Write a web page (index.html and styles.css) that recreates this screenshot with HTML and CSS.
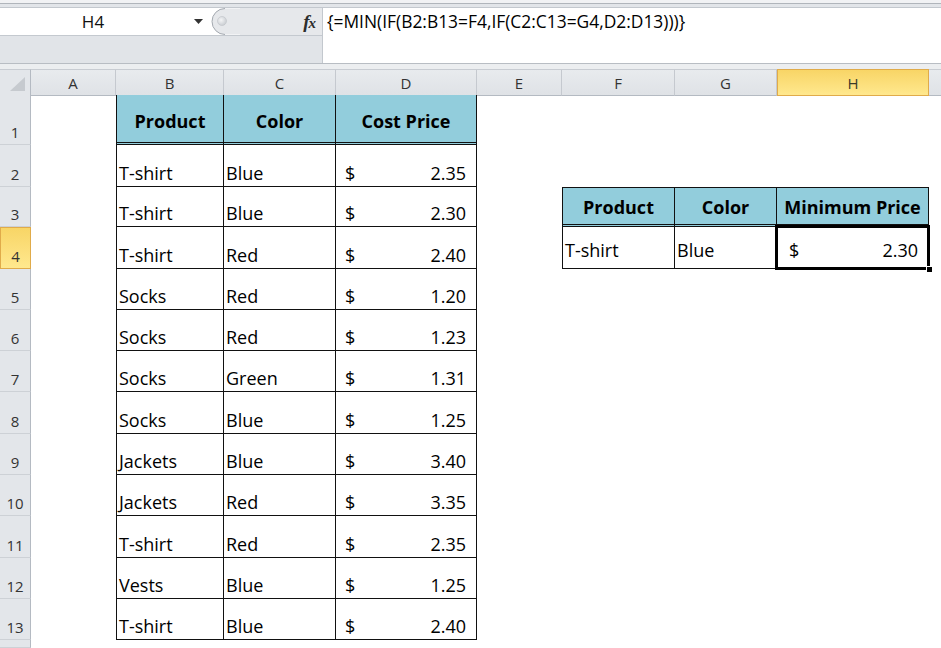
FILE: index.html
```html
<!DOCTYPE html>
<html>
<head>
<meta charset="utf-8">
<link rel="stylesheet" href="styles.css">
</head>
<body>
<div class="topstrip"></div>
<div class="fbar">
  <div class="fleft">
    <div class="frow1">
      <div class="namebox">H4</div>
      <div class="nbarrow"><svg width="9" height="5" viewBox="0 0 9 5"><polygon points="0,0 9,0 4.5,5" fill="#333"/></svg></div>
      <div class="nbbtn"><svg width="30" height="27" viewBox="0 0 30 27"><defs><radialGradient id="g" cx="0.4" cy="0.4" r="0.7"><stop offset="0" stop-color="#f4f5f6"/><stop offset="1" stop-color="#c4c8cd"/></radialGradient></defs><path d="M15 0.5 A13 13 0 0 0 15 26.5 L30 26.5 L30 0.5 Z" fill="#e6e8eb"/><path d="M15 0.5 A13 13 0 0 0 15 26.5" fill="none" stroke="#a3a8af" stroke-width="1"/><circle cx="12" cy="13" r="4.5" fill="url(#g)" stroke="#bfc3c8" stroke-width="0.6"/></svg></div>
      <div class="fxwrap"><span class="fx">f<span class="fxx">x</span></span></div>
    </div>
    <div class="frow2"></div>
  </div>
  <div class="fbox">{=MIN(IF(B2:B13=F4,IF(C2:C13=G4,D2:D13)))}</div>
</div>
<div class="sep"></div>
<div class="sheet">
  <div class="row hdr">
    <div class="corner"><svg width="30" height="25" viewBox="0 0 30 25"><polygon points="10,21 25,21 25,7" fill="#c6cacf"/></svg></div>
    <div class="ch">A</div><div class="ch">B</div><div class="ch">C</div><div class="ch">D</div><div class="ch">E</div><div class="ch">F</div><div class="ch">G</div><div class="ch sel">H</div><div class="ch rest"></div>
  </div>

  <div class="row h50">
    <div class="rh">1</div><div class="cell"></div>
    <div class="cell tb tl th t1h">Product</div><div class="cell tb th t1h">Color</div><div class="cell tb th t1h">Cost Price</div>
    <div class="cell"></div><div class="cell"></div><div class="cell"></div><div class="cell"></div><div class="cell"></div>
  </div>
  <div class="row h42">
    <div class="rh">2</div><div class="cell"></div>
    <div class="cell tb tl">T-shirt</div><div class="cell tb">Blue</div><div class="cell tb acct"><span>$</span><span>2.35</span></div>
    <div class="cell"></div><div class="cell"></div><div class="cell"></div><div class="cell"></div><div class="cell"></div>
  </div>
  <div class="row h40">
    <div class="rh">3</div><div class="cell"></div>
    <div class="cell tb tl">T-shirt</div><div class="cell tb">Blue</div><div class="cell tb acct"><span>$</span><span>2.30</span></div>
    <div class="cell"></div>
    <div class="cell tb tl tt th t2h">Product</div><div class="cell tb tt th t2h">Color</div><div class="cell tb tt th t2h">Minimum Price</div>
    <div class="cell"></div>
  </div>
  <div class="row h42">
    <div class="rh sel">4</div><div class="cell"></div>
    <div class="cell tb tl">T-shirt</div><div class="cell tb">Red</div><div class="cell tb acct"><span>$</span><span>2.40</span></div>
    <div class="cell"></div>
    <div class="cell tb tl mid">T-shirt</div><div class="cell tb mid">Blue</div>
    <div class="cell tb mid acct acct2"><span>$</span><span>2.30</span><div class="selbox"></div><div class="handle"></div></div>
    <div class="cell"></div>
  </div>
  <div class="row h41">
    <div class="rh">5</div><div class="cell"></div>
    <div class="cell tb tl">Socks</div><div class="cell tb">Red</div><div class="cell tb acct"><span>$</span><span>1.20</span></div>
    <div class="cell"></div><div class="cell"></div><div class="cell"></div><div class="cell"></div><div class="cell"></div>
  </div>
  <div class="row h41">
    <div class="rh">6</div><div class="cell"></div>
    <div class="cell tb tl">Socks</div><div class="cell tb">Red</div><div class="cell tb acct"><span>$</span><span>1.23</span></div>
    <div class="cell"></div><div class="cell"></div><div class="cell"></div><div class="cell"></div><div class="cell"></div>
  </div>
  <div class="row h41">
    <div class="rh">7</div><div class="cell"></div>
    <div class="cell tb tl">Socks</div><div class="cell tb">Green</div><div class="cell tb acct"><span>$</span><span>1.31</span></div>
    <div class="cell"></div><div class="cell"></div><div class="cell"></div><div class="cell"></div><div class="cell"></div>
  </div>
  <div class="row h42">
    <div class="rh">8</div><div class="cell"></div>
    <div class="cell tb tl">Socks</div><div class="cell tb">Blue</div><div class="cell tb acct"><span>$</span><span>1.25</span></div>
    <div class="cell"></div><div class="cell"></div><div class="cell"></div><div class="cell"></div><div class="cell"></div>
  </div>
  <div class="row h41">
    <div class="rh">9</div><div class="cell"></div>
    <div class="cell tb tl">Jackets</div><div class="cell tb">Blue</div><div class="cell tb acct"><span>$</span><span>3.40</span></div>
    <div class="cell"></div><div class="cell"></div><div class="cell"></div><div class="cell"></div><div class="cell"></div>
  </div>
  <div class="row h41">
    <div class="rh">10</div><div class="cell"></div>
    <div class="cell tb tl">Jackets</div><div class="cell tb">Red</div><div class="cell tb acct"><span>$</span><span>3.35</span></div>
    <div class="cell"></div><div class="cell"></div><div class="cell"></div><div class="cell"></div><div class="cell"></div>
  </div>
  <div class="row h42">
    <div class="rh">11</div><div class="cell"></div>
    <div class="cell tb tl">T-shirt</div><div class="cell tb">Red</div><div class="cell tb acct"><span>$</span><span>2.35</span></div>
    <div class="cell"></div><div class="cell"></div><div class="cell"></div><div class="cell"></div><div class="cell"></div>
  </div>
  <div class="row h41">
    <div class="rh">12</div><div class="cell"></div>
    <div class="cell tb tl">Vests</div><div class="cell tb">Blue</div><div class="cell tb acct"><span>$</span><span>1.25</span></div>
    <div class="cell"></div><div class="cell"></div><div class="cell"></div><div class="cell"></div><div class="cell"></div>
  </div>
  <div class="row h41">
    <div class="rh">13</div><div class="cell"></div>
    <div class="cell tb tl">T-shirt</div><div class="cell tb">Blue</div><div class="cell tb acct"><span>$</span><span>2.40</span></div>
    <div class="cell"></div><div class="cell"></div><div class="cell"></div><div class="cell"></div><div class="cell"></div>
  </div>
  <div class="row h8">
    <div class="rh"></div><div class="cell"></div>
    <div class="cell"></div><div class="cell"></div><div class="cell"></div>
    <div class="cell"></div><div class="cell"></div><div class="cell"></div><div class="cell"></div><div class="cell"></div>
  </div>
</div>
</body>
</html>
```
FILE: styles.css
```css
html, body {
  margin: 0;
  padding: 0;
  overflow: hidden;
  background: #fff;
}
body {
  width: 941px;
  height: 648px;
  font-family: "Open Sans", "Liberation Sans", sans-serif;
  color: #000;
}
.topstrip {
  height: 8px;
  background: linear-gradient(#f1f2f4 0 3px, #b0b5bb 3px 4px, #e2e5e9 4px 7px, #c3c8ce 7px 8px);
}
.fbar {
  display: flex;
  height: 55px;
}
.fleft {
  width: 323px;
  display: flex;
  flex-direction: column;
  background: #e1e4e8;
  border-right: 1px solid #c3c8ce;
  box-sizing: border-box;
}
.frow1 {
  height: 28px;
  display: flex;
  border-bottom: 1px solid #c4c9cf;
  box-sizing: border-box;
  background: #e6e8eb;
}
.namebox {
  width: 186px;
  background: #fff;
  display: flex;
  align-items: center;
  justify-content: center;
  font-size: 17px;
  color: #111;
}
.nbarrow {
  width: 24px;
  background: #fff;
  display: flex;
  align-items: center;
  justify-content: center;
}
.nbbtn {
  width: 30px;
  background: #fff;
  display: flex;
}
.fxwrap {
  flex: 1;
  display: flex;
  align-items: center;
  justify-content: flex-end;
  padding-right: 7px;
}
.fx {
  font-family: "Liberation Serif", "DejaVu Serif", serif;
  font-style: italic;
  font-weight: bold;
  font-size: 19px;
  color: #2d2d2d;
  letter-spacing: -1px;
}
.fxx {
  font-size: 15px;
}
.frow2 {
  flex: 1;
}
.fbox {
  flex: 1;
  background: #fff;
  padding: 1px 4px;
  font-size: 17.4px;
  line-height: 24px;
  color: #000;
}
.sep {
  height: 6px;
  background: #eceef0;
  border-top: 1px solid #b8bdc3;
  box-sizing: border-box;
}
.sheet {
  display: flex;
  flex-direction: column;
}
.row {
  display: grid;
  grid-template-columns: 31px 85px 108px 112px 141px 85px 113px 102px 152px 1fr;
  flex: none;
}
.hdr { height: 26px; }
.h50 { height: 50px; }
.h42 { height: 42px; }
.h41 { height: 41px; }
.h40 { height: 40px; }
.h8 { height: 8px; }
.corner {
  background: #e3e6ea;
  border-right: 1px solid #b4bac2;
  border-bottom: 1px solid #b4bac2;
  border-top: 1px solid #c8ccd2;
  box-sizing: border-box;
}
.corner svg { display: block; }
.ch {
  box-sizing: border-box;
  background: linear-gradient(#e8ebee, #dfe2e6);
  border-right: 1px solid #c5c9cf;
  border-bottom: 1px solid #b4bac2;
  border-top: 1px solid #c8ccd2;
  display: flex;
  align-items: center;
  justify-content: center;
  font-size: 15px;
  color: #333;
}
.ch.sel {
  background: linear-gradient(#f8d566, #ffe88e);
  border: 1px solid #e0ab4a;
  color: #3a3a2a;
}
.ch.rest { border-right: none; }
.cell {
  box-sizing: border-box;
  display: flex;
  align-items: flex-end;
  padding: 0 2px 2px;
  font-size: 18px;
  line-height: 22px;
  white-space: nowrap;
  position: relative;
  color: #000;
}
.rh {
  box-sizing: border-box;
  display: flex;
  align-items: flex-end;
  justify-content: center;
  background: #e3e6ea;
  border-right: 1px solid #b4bac2;
  border-bottom: 1px solid #cdd1d6;
  font-size: 15px;
  line-height: 18px;
  padding-bottom: 3px;
  color: #333;
}
.rh.sel {
  background: linear-gradient(#f8d566, #ffe88e);
  border: 1px solid #e0ab4a;
  color: #333;
}
.tb {
  border-right: 1px solid #111;
  border-bottom: 1px solid #111;
}
.tl { border-left: 1px solid #111; }
.tt { border-top: 1px solid #111; }
.th {
  background: #92cddc;
  font-weight: 700;
  justify-content: center;
  border-bottom: 3px double #111;
}
.t1h { padding-bottom: 10px; }
.t2h { padding-bottom: 6px; }
.mid { padding-bottom: 7px; }
.acct {
  justify-content: space-between;
  padding-left: 9px;
  padding-right: 10px;
}
.acct2 {
  padding-left: 12px;
  padding-right: 10px;
}
.selbox {
  position: absolute;
  left: -2px;
  top: -2px;
  right: -2px;
  bottom: -2px;
  border: 3px solid #000;
  pointer-events: none;
}
.handle {
  position: absolute;
  right: -5px;
  bottom: -5px;
  width: 5px;
  height: 5px;
  background: #000;
  border: 1px solid #fff;
}
```
